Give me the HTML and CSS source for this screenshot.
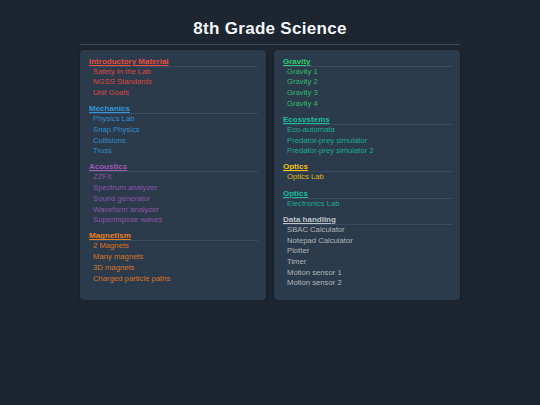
FILE: index.html
```html
<!DOCTYPE html>
<html lang="en">
<head>
    <meta charset="UTF-8">
    <title>8th Grade Science</title>
    <link rel="stylesheet" href="styles.css">
</head>
<body>
    <div id="page">
        <h1 id="title">8th Grade Science</h1>
        <div id="columns">
            <div class="panel">
                <div class="section red">
                    <div class="heading">Introductory Material</div>
                    <div class="item">Safety in the Lab</div>
                    <div class="item">NGSS Standards</div>
                    <div class="item">Unit Goals</div>
                </div>
                <div class="section blue">
                    <div class="heading">Mechanics</div>
                    <div class="item">Physics Lab</div>
                    <div class="item">Snap Physics</div>
                    <div class="item">Collisions</div>
                    <div class="item">Truss</div>
                </div>
                <div class="section purple">
                    <div class="heading">Acoustics</div>
                    <div class="item">ZZFX</div>
                    <div class="item">Spectrum analyzer</div>
                    <div class="item">Sound generator</div>
                    <div class="item">Waveform analyzer</div>
                    <div class="item">Superimpose waves</div>
                </div>
                <div class="section orange">
                    <div class="heading">Magnetism</div>
                    <div class="item">2 Magnets</div>
                    <div class="item">Many magnets</div>
                    <div class="item">3D magnets</div>
                    <div class="item">Charged particle paths</div>
                </div>
            </div>
            <div class="panel">
                <div class="section green">
                    <div class="heading">Gravity</div>
                    <div class="item">Gravity 1</div>
                    <div class="item">Gravity 2</div>
                    <div class="item">Gravity 3</div>
                    <div class="item">Gravity 4</div>
                </div>
                <div class="section teal">
                    <div class="heading">Ecosystems</div>
                    <div class="item">Eco-automata</div>
                    <div class="item">Predator-prey simulator</div>
                    <div class="item">Predator-prey simulator 2</div>
                </div>
                <div class="section yellow">
                    <div class="heading">Optics</div>
                    <div class="item">Optics Lab</div>
                </div>
                <div class="section teal">
                    <div class="heading">Optics</div>
                    <div class="item">Electronics Lab</div>
                </div>
                <div class="section gray">
                    <div class="heading">Data handling</div>
                    <div class="item">SBAC Calculator</div>
                    <div class="item">Notepad Calculator</div>
                    <div class="item">Plotter</div>
                    <div class="item">Timer</div>
                    <div class="item">Motion sensor 1</div>
                    <div class="item">Motion sensor 2</div>
                </div>
            </div>
        </div>
    </div>
</body>
</html>
```

FILE: styles.css
```css
body {
    margin: 0;
    font-family: "Liberation Sans", Arial, sans-serif;
    background-color: #1c2530;
}
#page {
    width: 380px;
    margin: 0 auto;
    padding-top: 19px;
}
#title {
    margin: 0;
    font-size: 17px;
    line-height: 20px;
    letter-spacing: 0.3px;
    text-align: center;
    color: #f4f6f8;
    padding-bottom: 5px;
    border-bottom: 1px solid #3a4a5d;
}
#columns {
    display: grid;
    grid-template-columns: 1fr 1fr;
    gap: 8px;
    margin-top: 5px;
}
.panel {
    background-color: #2c3b4c;
    border-radius: 4px;
    padding: 6.5px 8px 5px 9px;
    box-shadow: 0 1px 3px rgba(0, 0, 0, 0.35);
}
.section {
    margin-bottom: 5.5px;
}
.heading {
    font-size: 8px;
    font-weight: bold;
    line-height: 9px;
    text-decoration: underline;
    border-bottom: 1px solid #3b4b5e;
}
.item {
    font-size: 7.7px;
    line-height: 10.7px;
    padding-left: 4px;
    opacity: 0.88;
}
.red { color: #e74c3c; }
.blue { color: #3498db; }
.purple { color: #9b59b6; }
.orange { color: #e67e22; }
.green { color: #2ecc71; }
.teal { color: #1abc9c; }
.yellow { color: #f1c40f; }
.gray { color: #bdc3c7; }
```
